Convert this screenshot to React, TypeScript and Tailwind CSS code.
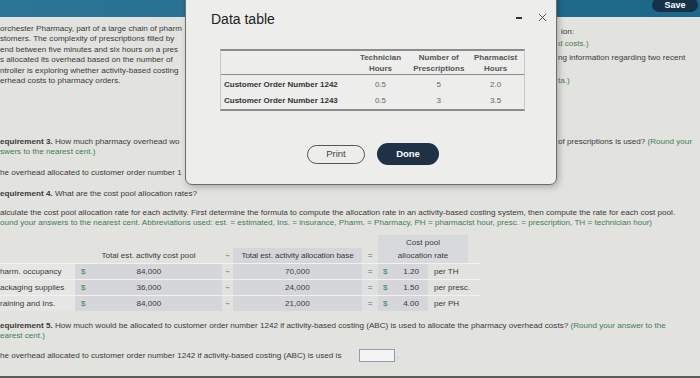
import { X } from 'lucide-react';

const green = 'text-[#3f7e52]';

const rows = [
  { label: 'harm. occupancy', cost: '84,000', base: '70,000', rate: '1.20', unit: 'per TH' },
  { label: 'ackaging supplies', cost: '36,000', base: '24,000', rate: '1.50', unit: 'per presc.' },
  { label: 'raining and Ins.', cost: '84,000', base: '21,000', rate: '4.00', unit: 'per PH' },
];

export default function App() {
  return (
    <div className="relative flex flex-col w-[700px] h-[378px] overflow-hidden bg-[#e2e2df] text-[#3a3a3a] font-['Liberation_Sans',Arial,sans-serif] text-[8.1px] leading-[10px] whitespace-nowrap">
      {/* top bar */}
      <div className="h-[17px] shrink-0 bg-gradient-to-r from-[#2d7594] to-[#1c6888] flex justify-end">
        <div className="-mt-[2px] mr-[2px] h-[14px] w-[46px] rounded-full bg-[#15324a] text-white text-[9px] leading-[10px] font-bold flex items-center justify-center">
          Save
        </div>
      </div>

      {/* area behind the dialog */}
      <div className="flex h-[168px] shrink-0">
        <div className="w-[185px] overflow-hidden pt-[7px]">
          <div className="leading-[10.4px]">
            <p>orchester Pharmacy, part of a large chain of pharm</p>
            <p>stomers. The complexity of prescriptions filled by</p>
            <p>end between five minutes and six hours on a pres</p>
            <p>s allocated its overhead based on the number of</p>
            <p>ntroller is exploring whether activity-based costing</p>
            <p>erhead costs to pharmacy orders.</p>
          </div>
          <p className="mt-[51px]"><b>equirement 3.</b> How much pharmacy overhead wo</p>
          <p className={green}>swers to the nearest cent.)</p>
          <p className="mt-[11px]">he overhead allocated to customer order number 1</p>
        </div>
        <div className="flex-1" />
        <div className="w-[143px] overflow-hidden pl-[1px] pt-[10px]">
          <p className="pl-[3px]">ion:</p>
          <p className={`mt-[2px] ${green}`}>d costs.)</p>
          <p className="mt-[4px]">ng information regarding two recent</p>
          <p className={`mt-[13px] ${green}`}>ta.)</p>
          <p className="mt-[51px]">of prescriptions is used? <span className={green}>(Round your</span></p>
        </div>
      </div>

      {/* requirement 4 */}
      <p className="mt-[4px]"><b>equirement 4.</b> What are the cost pool allocation rates?</p>
      <p className="mt-[9px]">
        alculate the cost pool allocation rate for each activity. First determine the formula to compute the allocation rate in an activity-based costing system, then compute the rate for each cost pool.
      </p>
      <p className={green}>
        ound your answers to the nearest cent. Abbreviations used: est. = estimated, Ins. = insurance, Pharm. = Pharmacy, PH = pharmacist hour, presc. = prescription, TH = technician hour)
      </p>

      <div className="mt-[7px] w-[480px]">
        <div className="flex items-end">
          <div className="w-[75px]" />
          <div className="w-[147px] h-[15px] flex items-center justify-center">Total est. activity cost pool</div>
          <div className={`w-[11px] h-[15px] flex items-center justify-center ${green}`}>÷</div>
          <div className="w-[129px] h-[15px] bg-[#d4d6d9] flex items-center justify-center tracking-[-0.1px]">Total est. activity allocation base</div>
          <div className={`w-[16px] h-[15px] flex items-center justify-center ${green}`}>=</div>
          <div className="w-[90px] h-[28px] bg-[#d8d9db] flex flex-col items-center justify-center leading-[13px]">
            <span>Cost pool</span>
            <span>allocation rate</span>
          </div>
        </div>
        {rows.map((r) => (
          <div key={r.label} className="flex h-[16px] border-t border-[#f1f1f0]">
            <div className="w-[75px] bg-[#e6e6e4] flex items-center">{r.label}</div>
            <div className="w-[147px] bg-[#d4d6d9] flex items-center pl-[6px]">
              <span className={green}>$</span>
              <span className="flex-1 text-center pr-[10px]">{r.cost}</span>
            </div>
            <div className={`w-[11px] flex items-center justify-center ${green}`}>÷</div>
            <div className="w-[129px] bg-[#d4d6d9] flex items-center justify-center">{r.base}</div>
            <div className={`w-[16px] bg-[#dfe0e1] flex items-center justify-center ${green}`}>=</div>
            <div className="w-[50px] bg-[#d4d6d9] flex items-center pl-[5px] pr-[9px]">
              <span className={green}>$</span>
              <span className="ml-auto">{r.rate}</span>
            </div>
            <div className="pl-[6px] flex items-center">{r.unit}</div>
          </div>
        ))}
      </div>

      {/* requirement 5 */}
      <p className="mt-[10px]">
        <b>equirement 5.</b> How much would be allocated to customer order number 1242 if activity-based costing (ABC) is used to allocate the pharmacy overhead costs?{' '}
        <span className={green}>(Round your answer to the</span>
      </p>
      <p className={green}>earest cent.)</p>
      <div className="mt-[8px] flex items-center">
        <span>he overhead allocated to customer order number 1242 if activity-based costing (ABC) is used is</span>
        <span className="ml-[18px] w-[36px] h-[13px] border-[1.5px] border-[#8d9db2] bg-[#f4f4f4]" />
        <span className="ml-[1px] text-[#999]">.</span>
      </div>
      <div className="mt-auto h-[2px] bg-[#5c5c5c]" />

      {/* dialog */}
      <div className="absolute left-[185px] top-[-10px] w-[372px] h-[195px] rounded-b-[7px] border border-[#6c6c6c] bg-[#ededeb] shadow-[2px_2px_6px_rgba(0,0,0,0.25)] flex flex-col whitespace-normal">
        <div className="flex items-start pt-[20px] pl-[25px] pr-[7px]">
          <h2 className="text-[14px] leading-[16px] text-[#222]">Data table</h2>
          <div className="ml-auto flex items-center gap-[14px]">
            <span className="w-[6px] h-[2px] bg-[#333]" />
            <X className="w-[13px] h-[13px] text-[#333]" strokeWidth={1.5} />
          </div>
        </div>

        <div className="ml-[34px] mt-[22px] w-[305px] border-t-2 border-b-2 border-x border-t-[#8c8c8c] border-b-[#8c8c8c] border-x-[#c8c8c8] text-[8px]">
          <div className="flex border-b border-[#8c8c8c] pt-[2px] font-bold text-[#555] leading-[10.5px] text-center">
            <div className="w-[130px]" />
            <div className="w-[60px]">Technician<br />Hours</div>
            <div className="w-[57px]">Number of<br />Prescriptions</div>
            <div className="w-[57px]">Pharmacist<br />Hours</div>
          </div>
          <div className="pt-[2px]">
            {[
              ['Customer Order Number 1242', '0.5', '5', '2.0'],
              ['Customer Order Number 1243', '0.5', '3', '3.5'],
            ].map((r) => (
              <div key={r[0]} className="flex h-[16px] items-center text-[#666]">
                <div className="w-[130px] pl-[3px] font-bold text-[#333]">{r[0]}</div>
                <div className="w-[60px] text-center">{r[1]}</div>
                <div className="w-[57px] text-center">{r[2]}</div>
                <div className="w-[57px] text-center">{r[3]}</div>
              </div>
            ))}
          </div>
        </div>

        <div className="mt-[32px] pl-[121px] flex items-center gap-[12px] text-[9.5px]">
          <button className="w-[58px] h-[19px] rounded-full border border-[#555] text-[#444]">Print</button>
          <button className="w-[62px] h-[22px] rounded-full bg-[#1f3147] text-white font-semibold">Done</button>
        </div>
      </div>
    </div>
  );
}
